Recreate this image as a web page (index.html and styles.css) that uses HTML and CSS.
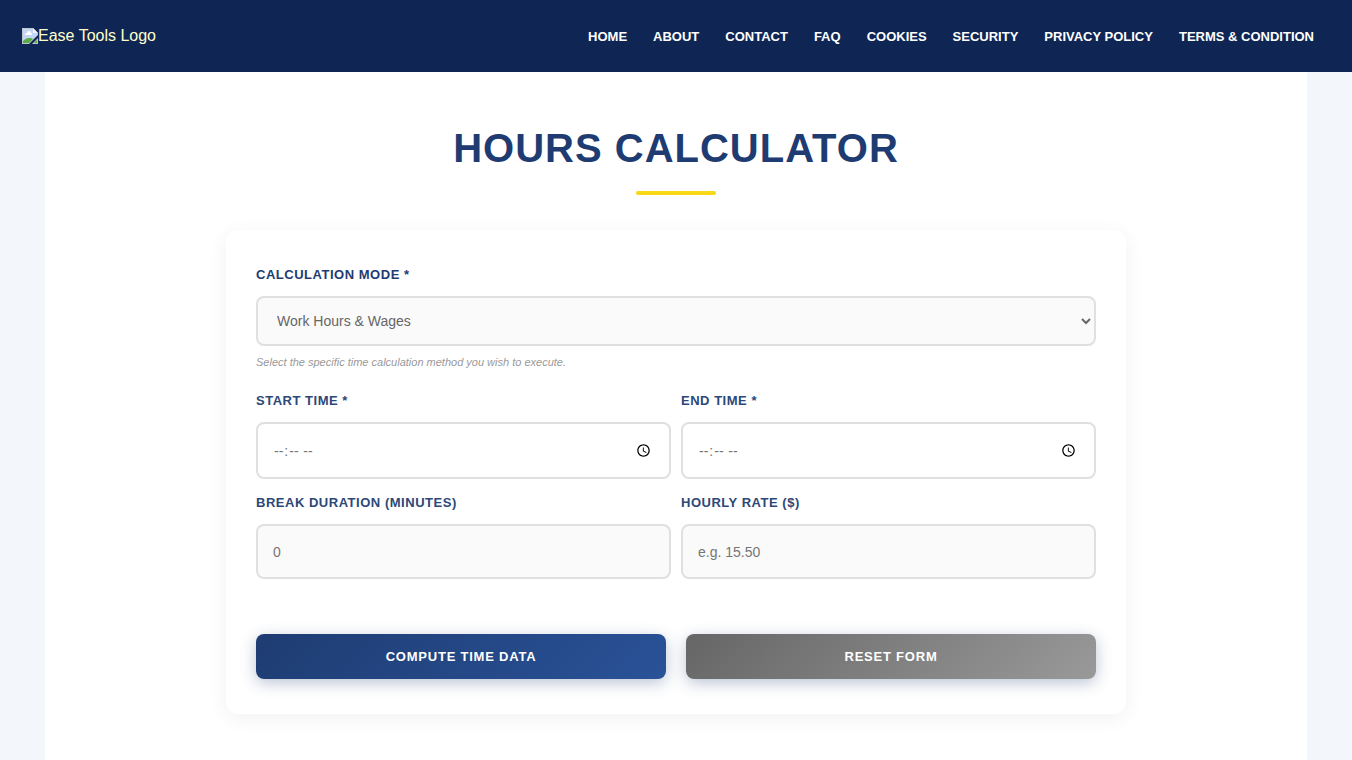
FILE: index.html
```html
<!DOCTYPE html>
<html lang="en-US">
<head>
<meta charset="utf-8">
<meta name="viewport" content="width=device-width, initial-scale=1">
<title>Hours Calculator</title>
<link rel="stylesheet" href="styles.css">
</head>
<body>
<header class="site-header">
  <a class="logo" href="#">
    <svg class="logo-icon" width="16" height="16" viewBox="0 0 16 16" aria-hidden="true">
      <path d="M0 0h11l5 5v2L7 16H0z" fill="#c0c6cc"/>
      <path d="M1 1h10v4h4v2L7 15H1z" fill="#c3d6f8"/>
      <path d="M3 7a2 2 0 0 1 2-2 2 2 0 0 1 4 0 1 1 0 0 1 0 2H3z" fill="#fff"/>
      <path d="M1 15v-2c2-2 4-3 6-3 2 0 3 0 4 1l-4 4z" fill="#5bab46"/>
      <path d="M16 10v6h-6z" fill="#c0c6cc"/>
      <path d="M15 12v3h-3z" fill="#5bab46"/>
      <path d="M11 0l5 5h-5z" fill="#f2f4f7"/>
    </svg><span>Ease Tools Logo</span>
  </a>
  <nav class="nav" aria-label="Main">
    <a href="#">HOME</a>
    <a href="#">ABOUT</a>
    <a href="#">CONTACT</a>
    <a href="#">FAQ</a>
    <a href="#">COOKIES</a>
    <a href="#">SECURITY</a>
    <a href="#">PRIVACY POLICY</a>
    <a href="#">TERMS &amp; CONDITION</a>
  </nav>
</header>
<main class="page">
  <h1 class="title">HOURS CALCULATOR</h1>
  <form class="card">
    <div class="field">
      <label for="mode">CALCULATION MODE *</label>
      <select id="mode" class="control control-select">
        <option>Work Hours &amp; Wages</option>
      </select>
      <p class="help">Select the specific time calculation method you wish to execute.</p>
    </div>
    <div class="fields">
      <div class="field">
        <label for="start">START TIME *</label>
        <input id="start" class="control control-time" type="time">
      </div>
      <div class="field">
        <label for="end">END TIME *</label>
        <input id="end" class="control control-time" type="time">
      </div>
      <div class="field">
        <label for="break">BREAK DURATION (MINUTES)</label>
        <input id="break" class="control" type="number" placeholder="0">
      </div>
      <div class="field">
        <label for="rate">HOURLY RATE ($)</label>
        <input id="rate" class="control" type="number" placeholder="e.g. 15.50">
      </div>
    </div>
    <div class="actions">
      <button class="button button-primary" type="button">COMPUTE TIME DATA</button>
      <button class="button button-reset" type="reset">RESET FORM</button>
    </div>
  </form>
</main>
</body>
</html>
```
FILE: styles.css
```css
* {
  box-sizing: border-box;
}

body {
  margin: 0;
  background: #f3f7fb;
  font-family: "Liberation Sans", Arial, sans-serif;
  min-height: 100vh;
  display: flex;
  flex-direction: column;
}

.site-header {
  display: flex;
  align-items: center;
  justify-content: space-between;
  min-height: 72px;
  padding: 0 38px 0 22px;
  background: #0f2655;
}

.logo {
  display: flex;
  align-items: center;
  color: #ffffcc;
  font-size: 16px;
  line-height: 18px;
  text-decoration: none;
}

.nav {
  display: flex;
  flex-wrap: wrap;
  gap: 26px;
}

.nav a {
  padding-top: 2px;
  color: #fff;
  font-size: 13px;
  font-weight: 700;
  line-height: 20px;
  text-decoration: none;
}

.page {
  flex: 1;
  margin: 0 45px;
  padding: 52px 20px 46px;
  background: #fff;
}

.title {
  margin: 0 0 35px;
  color: #1e3c72;
  font-size: 40px;
  line-height: 48px;
  letter-spacing: 1px;
  text-align: center;
}

.title::after {
  content: "";
  display: block;
  width: 80px;
  height: 4px;
  margin: 19px auto 0;
  border-radius: 2px;
  background: #f7d716;
}

.card {
  max-width: 900px;
  margin: 0 auto;
  padding: 35px 30px;
  border-radius: 12px;
  background: #fff;
  box-shadow: 0 4px 20px rgba(0, 0, 0, 0.06);
}

.field {
  display: flex;
  flex-direction: column;
}

.field label {
  margin-bottom: 11px;
  color: #1e3c72;
  font-size: 13px;
  font-weight: 700;
  line-height: 20px;
  letter-spacing: 0.04em;
}

.fields .field label {
  color: #2c4878;
}

.control {
  width: 100%;
  height: 55px;
  padding: 0 15px;
  border: 2px solid #e0e0e0;
  border-radius: 8px;
  background: #fafafa;
  color: #666;
  font-family: inherit;
  font-size: 14px;
}

.control::placeholder {
  color: #757575;
}

.control-select {
  height: 50px;
}

.control-time {
  height: 57px;
  background: #fff;
  color: #757575;
}

.help {
  margin: 8px 0 21px;
  color: #999;
  font-size: 11px;
  font-style: italic;
  line-height: 16px;
}

.fields {
  display: grid;
  grid-template-columns: 1fr 1fr;
  gap: 14px 10px;
}

.actions {
  display: grid;
  grid-template-columns: 1fr 1fr;
  gap: 20px;
  margin-top: 55px;
}

.button {
  min-height: 45px;
  border: 0;
  border-radius: 8px;
  color: #fff;
  font-family: inherit;
  font-size: 13px;
  font-weight: 700;
  letter-spacing: 0.06em;
  box-shadow: 0 4px 15px rgba(30, 60, 114, 0.3);
}

.button-primary {
  background: linear-gradient(135deg, #1e3c72, #2a5298);
}

.button-reset {
  background: linear-gradient(135deg, #666, #999);
}
```
